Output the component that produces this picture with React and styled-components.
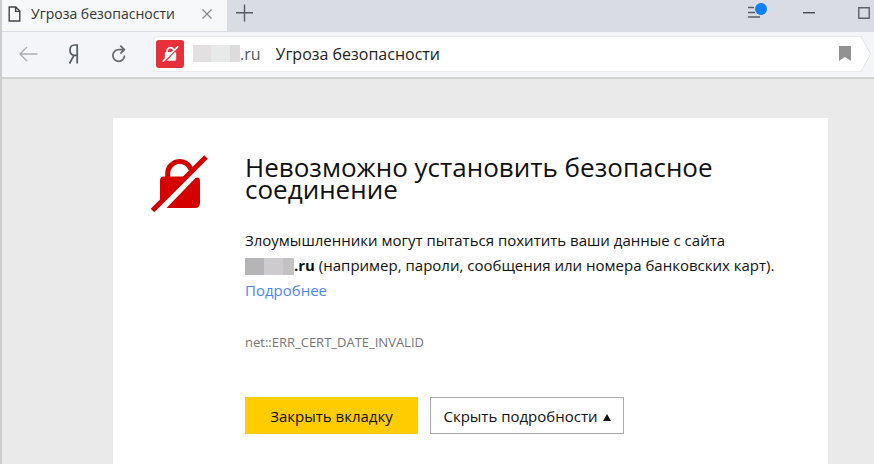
import React, { useState } from "react";
import styled, { createGlobalStyle } from "styled-components";

const GlobalStyle = createGlobalStyle`
  * {
    box-sizing: border-box;
  }

  body {
    margin: 0;
    background: #eaeaea;
    font-family: "Open Sans", "Noto Sans", sans-serif;
    color: #111;
  }
`;

const Browser = styled.div`
  display: flex;
  flex-direction: column;
  min-height: 100vh;
  border-left: 2px solid #cbcccd;
  overflow: hidden;
`;

const TabBar = styled.div`
  display: flex;
  height: 32px;
  padding-bottom: 1px;
  background: #dadce5;
`;

const Tab = styled.div`
  display: flex;
  align-items: center;
  width: 225px;
  padding: 0 13px 4px 6px;
  background: #f7f8fa;
  font-size: 14px;
  color: #333;

  span {
    flex: 1;
    margin-left: 10px;
    white-space: nowrap;
  }
`;

const IconButton = styled.button`
  display: flex;
  align-items: center;
  justify-content: center;
  flex: none;
  width: ${(props) => props.$width || 12}px;
  padding: 0;
  border: none;
  background: none;
  cursor: pointer;
`;

const WindowControls = styled.div`
  display: flex;
  align-items: flex-start;
  gap: 43px;
  margin-left: auto;
  padding-right: 4px;
`;

const MenuButton = styled(IconButton)`
  position: relative;
`;

const Badge = styled.i`
  position: absolute;
  top: 3px;
  left: 7px;
  width: 12px;
  height: 12px;
  border-radius: 50%;
  background: #0d7ff8;
`;

const Toolbar = styled.div`
  display: flex;
  align-items: center;
  height: 47px;
  padding: 0 3px 2px 16px;
  border-bottom: 2px solid #d1d3d3;
  background: #f4f5f8;
`;

const NavButtons = styled.div`
  display: flex;
  align-items: center;
  gap: 24px;
  width: 135px;
`;

const AddressBar = styled.div`
  display: flex;
  flex: 1;
  align-items: center;
  height: 36px;
  padding: 0 9px 0 2px;
  border: 1px solid #e8eaec;
  border-right: none;
  border-radius: 5px 0 0 5px;
  background: #fff;
`;

const Shield = styled(IconButton)`
  height: 28px;
  border-radius: 3px;
  background: #e8303a;
`;

const Host = styled.span`
  display: flex;
  align-items: center;
  margin: 0 15px 0 9px;
  font-size: 16px;
  color: #555;
`;

const AddressInput = styled.input`
  flex: 1;
  min-width: 0;
  padding: 0;
  border: none;
  outline: none;
  background: none;
  font: 16px "Open Sans", "Noto Sans", sans-serif;
  color: #222;
`;

const Mask = styled.span`
  display: inline-block;
  width: ${(props) => props.$width}px;
  height: 17px;
  vertical-align: ${(props) => props.$align || "baseline"};
  background: linear-gradient(
    90deg,
    ${(props) => props.$colors[0]} 38%,
    ${(props) => props.$colors[1]} 38% 78%,
    ${(props) => props.$colors[2]} 78%
  );
`;

const Content = styled.main`
  display: flex;
  flex: 1;
  padding: 39px 46px 0 111px;
`;

const Card = styled.section`
  display: flex;
  flex: 1;
  align-items: flex-start;
  gap: 35px;
  padding: 36px 32px 30px 37px;
  background: #fff;
`;

const Details = styled.div`
  flex: 1;
`;

const Title = styled.h1`
  margin: 2px 0 28px;
  font-size: 26px;
  font-weight: 400;
  line-height: 22px;
`;

const Message = styled.p`
  margin: 0;
  font-size: 15px;
  line-height: 25px;
`;

const MoreLink = styled.a`
  font-size: 15px;
  line-height: 25px;
  color: #4a86f7;
  text-decoration: none;
`;

const ErrorCode = styled.p`
  margin: 29px 0 45px;
  font-size: 13px;
  line-height: 20px;
  color: #777;
`;

const Actions = styled.div`
  display: flex;
  gap: 12px;
`;

const ActionButton = styled.button`
  height: 37px;
  width: ${(props) => props.$width}px;
  padding: 0;
  border: ${(props) => (props.$primary ? "none" : "1px solid #aaa")};
  background: ${(props) => (props.$primary ? "#ffcc00" : "#fff")};
  font: 15px "Open Sans", "Noto Sans", sans-serif;
  color: #111;
  white-space: nowrap;
  cursor: pointer;
`;

const Caret = styled.span`
  display: inline-block;
  margin: 0 0 1px 5px;
  border: 4px solid transparent;
  border-top: none;
  border-bottom: 7px solid #111;
`;

function App() {
  const [address, setAddress] = useState("Угроза безопасности");
  const [open, setOpen] = useState(true);

  return (
    <>
      <GlobalStyle />
      <Browser>
        <TabBar>
          <Tab>
            <svg width="13" height="16" viewBox="0 0 13 16" fill="none" stroke="#444" strokeWidth="1.4">
              <path d="M1.2 1h6.6l4 4v10H1.2z M7.6 1v4.4h4.2" />
            </svg>
            <span>Угроза безопасности</span>
            <IconButton aria-label="Закрыть" $width={14}>
              <svg width="10" height="10" viewBox="0 0 10 10" stroke="#888" strokeWidth="1.2">
                <path d="M.5.5l9 9M9.5.5l-9 9" />
              </svg>
            </IconButton>
          </Tab>
          <IconButton aria-label="Новая вкладка" $width={35}>
            <svg width="17" height="31" viewBox="0 0 17 31" stroke="#555a62" strokeWidth="1.4">
              <path d="M0 12.7h17M8.5 4.5v17" />
            </svg>
          </IconButton>
          <WindowControls>
            <MenuButton aria-label="Меню">
              <svg width="12" height="22" viewBox="0 0 12 22">
                <path d="M0 7.5h6M0 12.5h7M0 17h12" stroke="#555b66" strokeWidth="1.4" />
              </svg>
              <Badge />
            </MenuButton>
            <IconButton aria-label="Свернуть">
              <svg width="12" height="22" viewBox="0 0 12 22">
                <path d="M0 12.7h12" stroke="#444b56" strokeWidth="1.4" />
              </svg>
            </IconButton>
            <IconButton aria-label="Развернуть">
              <svg width="12" height="22" viewBox="0 0 12 22" fill="none">
                <path d="M.8 7.8h10.4v10.4H.8z" stroke="#59616b" strokeWidth="1.4" />
              </svg>
            </IconButton>
          </WindowControls>
        </TabBar>

        <Toolbar>
          <NavButtons>
            <IconButton aria-label="Назад" $width={20}>
              <svg width="19" height="16" viewBox="0 0 19 16" fill="none" stroke="#aaadb0" strokeWidth="1.4">
                <path d="M18.5 8H1M8 1L1 8l7 7" />
              </svg>
            </IconButton>
            <IconButton aria-label="Яндекс" $width={22}>
              <svg width="11" height="20" viewBox="0 0 11 20" fill="none" stroke="#555c60" strokeWidth="1.7">
                <path d="M9.2 19.5V1H6.6C3.6 1 2 3 2 6s1.600 5.300 4.600 5.300h2.600M6 11.300L1.500 19.500" />
              </svg>
            </IconButton>
            <IconButton aria-label="Обновить" $width={22}>
              <svg width="16" height="18" viewBox="0 0 16 18" fill="none" stroke="#686c70" strokeWidth="1.8">
                <path d="M13.500 10.500A5.800 5.800 0 1 1 7.700 4.700H12M9.300.7l4 4-4 4" />
              </svg>
            </IconButton>
          </NavButtons>
          <AddressBar>
            <Shield aria-label="Соединение не защищено" $width={28}>
              <svg width="17" height="18" viewBox="0 0 60 60">
                <path
                  d="M18 24V19A12 12 0 0 1 41 15M2.5 57L57 3"
                  fill="none"
                  stroke="#fff"
                  strokeWidth="6"
                />
                <path
                  d="M14 22.5H37L10 49V26.5q0-4 4-4z M45 24q4-2 5 3v22q0 5-5 5H17z"
                  fill="#fff"
                />
              </svg>
            </Shield>
            <Host>
              <Mask $width={47} $colors={["#e2e0e0", "#e7eae9", "#dedbdd"]} />
              .ru
            </Host>
            <AddressInput
              aria-label="Адрес"
              value={address}
              onChange={(e) => setAddress(e.target.value)}
            />
            <IconButton aria-label="В закладки">
              <svg width="12" height="15" viewBox="0 0 12 15">
                <path d="M0 0h12v15L6 11l-6 4z" fill="#929292" />
              </svg>
            </IconButton>
          </AddressBar>
          <svg width="11" height="36" viewBox="0 0 11 36">
            <path d="M0 .5h1L10.5 18 1 35.5H0" fill="#fff" stroke="#e0e3e6" />
          </svg>
        </Toolbar>

        <Content>
          <Card>
            <svg width="60" height="60" viewBox="0 0 60 60">
              <path
                d="M17.700 24V19A12 12 0 0 1 41 15.500M2.500 56.500L56 3"
                fill="none"
                stroke="#d40000"
                strokeWidth="5"
              />
              <path
                d="M14 22.5H37L10 49V26.5q0-4 4-4z M45.500 24q4-2 4.500 2.500v22.500q0 5-5 5H16.500z"
                fill="#d40000"
              />
            </svg>
            <Details>
              <Title>Невозможно установить безопасное соединение</Title>
              <Message>
                Злоумышленники могут пытаться похитить ваши данные с сайта
                <br />
                <Mask $width={49} $align="middle" $colors={["#b5b5b7", "#cdcbcd", "#c1c2c1"]} />
                <b>.ru</b> (например, пароли, сообщения или номера банковских карт).
              </Message>
              <MoreLink href="#more">Подробнее</MoreLink>
              {open && <ErrorCode>net::ERR_CERT_DATE_INVALID</ErrorCode>}
              <Actions>
                <ActionButton $primary $width={173}>
                  Закрыть вкладку
                </ActionButton>
                <ActionButton $width={194} aria-expanded={open} onClick={() => setOpen(!open)}>
                  Скрыть подробности
                  <Caret />
                </ActionButton>
              </Actions>
            </Details>
          </Card>
        </Content>
      </Browser>
    </>
  );
}

export default App;
